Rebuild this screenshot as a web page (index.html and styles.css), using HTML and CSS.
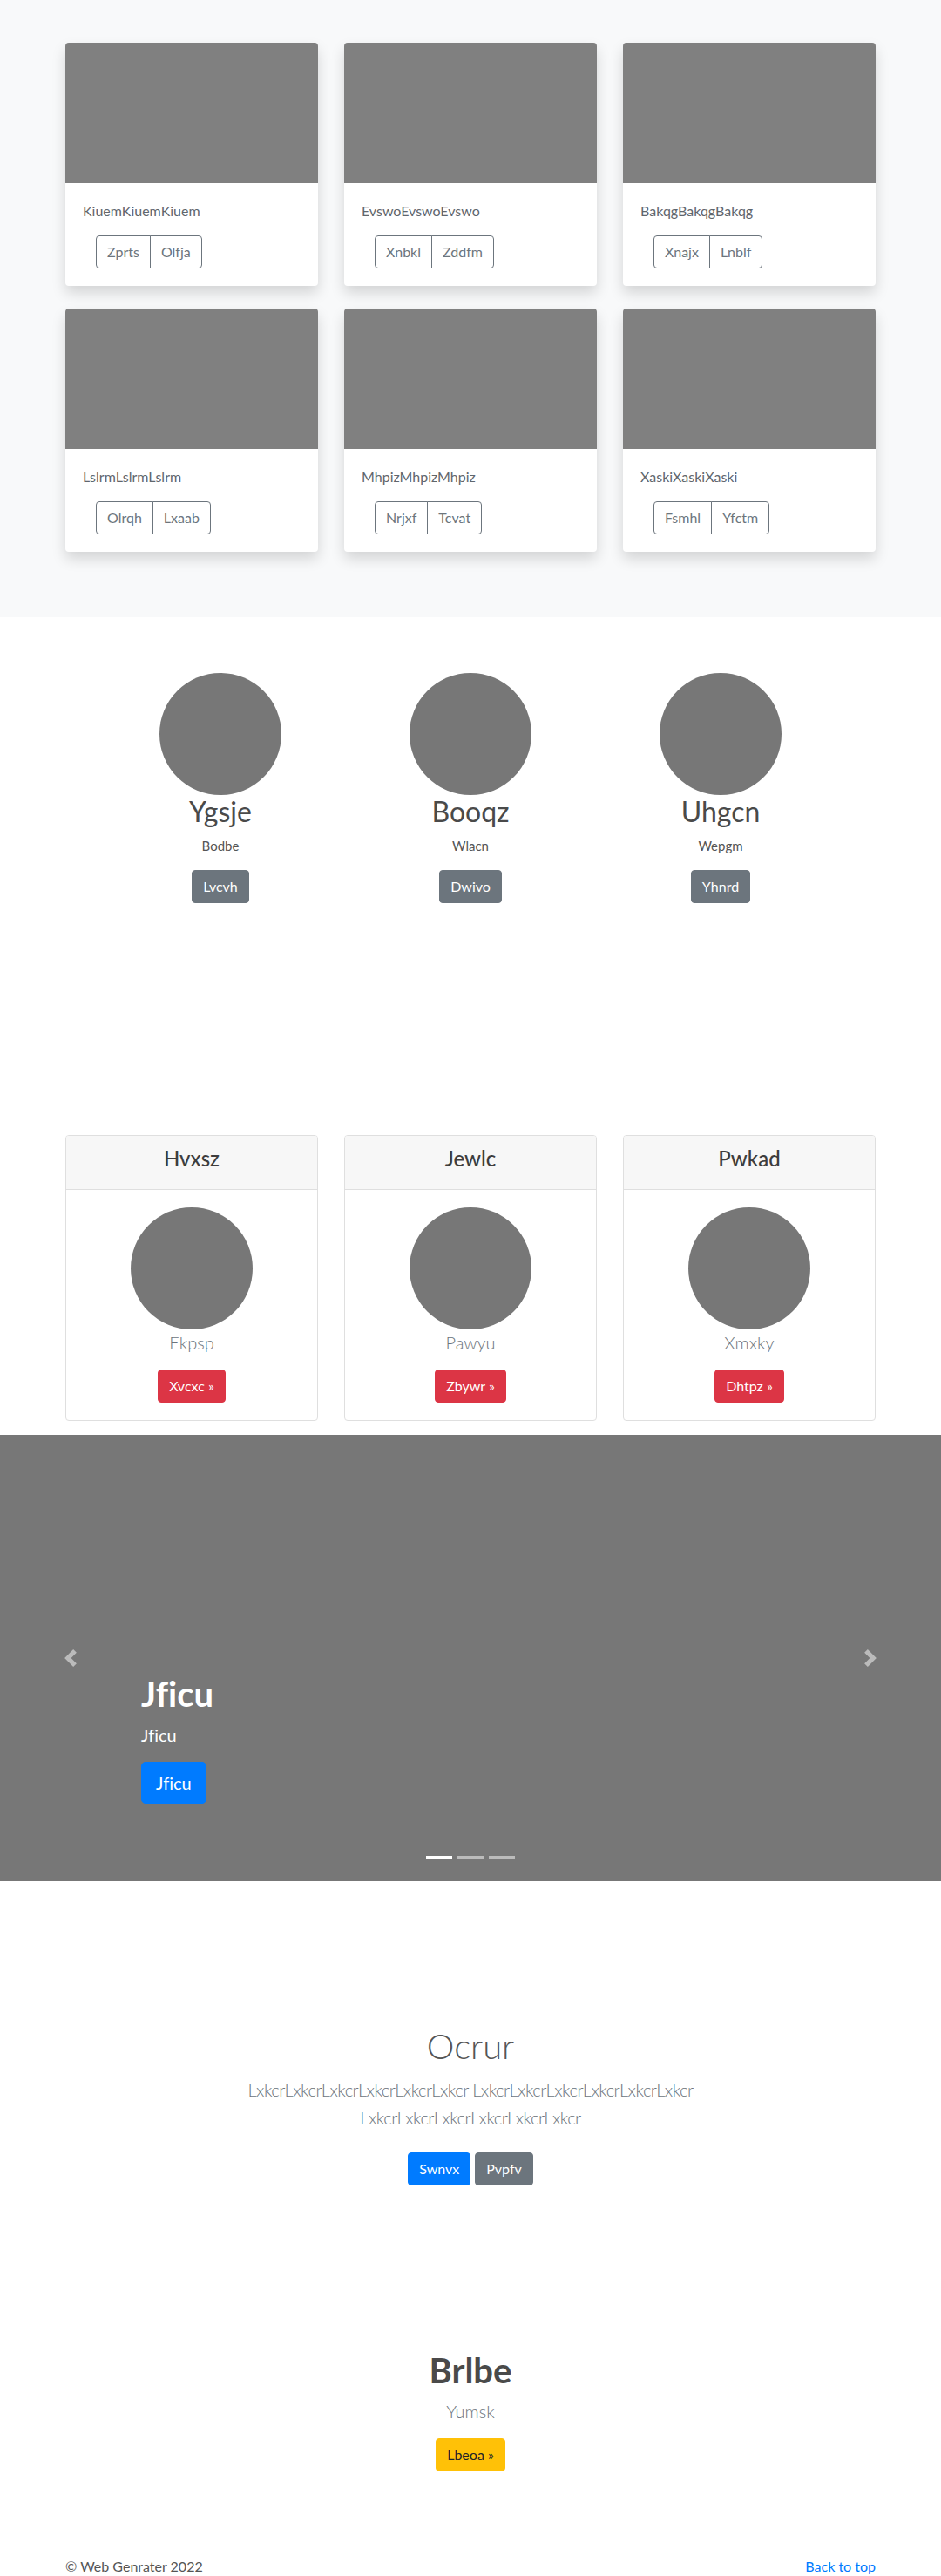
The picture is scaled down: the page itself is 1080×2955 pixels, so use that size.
FILE: index.html
```html
<!DOCTYPE html>
<html lang="en">
<head>
<meta charset="utf-8">
<title>Web Genrater</title>
<link rel="stylesheet" href="styles.css">
</head>
<body>
<section class="album">
  <div class="container album-grid">
    <div class="card">
      <div class="card-img"></div>
      <div class="card-body">
        <p class="card-text">KiuemKiuemKiuem</p>
        <div class="btn-group"><a class="btn btn-outline">Zprts</a><a class="btn btn-outline">Olfja</a></div>
      </div>
    </div>
    <div class="card">
      <div class="card-img"></div>
      <div class="card-body">
        <p class="card-text">EvswoEvswoEvswo</p>
        <div class="btn-group"><a class="btn btn-outline">Xnbkl</a><a class="btn btn-outline">Zddfm</a></div>
      </div>
    </div>
    <div class="card">
      <div class="card-img"></div>
      <div class="card-body">
        <p class="card-text">BakqgBakqgBakqg</p>
        <div class="btn-group"><a class="btn btn-outline">Xnajx</a><a class="btn btn-outline">Lnblf</a></div>
      </div>
    </div>
    <div class="card">
      <div class="card-img"></div>
      <div class="card-body">
        <p class="card-text">LslrmLslrmLslrm</p>
        <div class="btn-group"><a class="btn btn-outline">Olrqh</a><a class="btn btn-outline">Lxaab</a></div>
      </div>
    </div>
    <div class="card">
      <div class="card-img"></div>
      <div class="card-body">
        <p class="card-text">MhpizMhpizMhpiz</p>
        <div class="btn-group"><a class="btn btn-outline">Nrjxf</a><a class="btn btn-outline">Tcvat</a></div>
      </div>
    </div>
    <div class="card">
      <div class="card-img"></div>
      <div class="card-body">
        <p class="card-text">XaskiXaskiXaski</p>
        <div class="btn-group"><a class="btn btn-outline">Fsmhl</a><a class="btn btn-outline">Yfctm</a></div>
      </div>
    </div>
  </div>
</section>

<section class="features">
  <div class="features-grid">
    <div class="feature">
      <div class="avatar"></div>
      <h2 class="feature-title">Ygsje</h2>
      <p class="feature-text">Bodbe</p>
      <a class="btn btn-secondary">Lvcvh</a>
    </div>
    <div class="feature">
      <div class="avatar"></div>
      <h2 class="feature-title">Booqz</h2>
      <p class="feature-text">Wlacn</p>
      <a class="btn btn-secondary">Dwivo</a>
    </div>
    <div class="feature">
      <div class="avatar"></div>
      <h2 class="feature-title">Uhgcn</h2>
      <p class="feature-text">Wepgm</p>
      <a class="btn btn-secondary">Yhnrd</a>
    </div>
  </div>
</section>

<section class="team">
  <div class="container team-grid">
    <div class="team-card">
      <div class="team-header"><h4 class="team-name">Hvxsz</h4></div>
      <div class="team-body">
        <div class="avatar"></div>
        <p class="team-role">Ekpsp</p>
        <a class="btn btn-danger">Xvcxc »</a>
      </div>
    </div>
    <div class="team-card">
      <div class="team-header"><h4 class="team-name">Jewlc</h4></div>
      <div class="team-body">
        <div class="avatar"></div>
        <p class="team-role">Pawyu</p>
        <a class="btn btn-danger">Zbywr »</a>
      </div>
    </div>
    <div class="team-card">
      <div class="team-header"><h4 class="team-name">Pwkad</h4></div>
      <div class="team-body">
        <div class="avatar"></div>
        <p class="team-role">Xmxky</p>
        <a class="btn btn-danger">Dhtpz »</a>
      </div>
    </div>
  </div>
</section>

<section class="carousel">
  <a class="carousel-control prev" aria-label="Previous">
    <svg class="control-icon" viewBox="0 0 8 8" width="20" height="20"><path d="M5.25 0l-4 4 4 4 1.5-1.5L4.25 4l2.5-2.5L5.25 0z" fill="#fff"/></svg>
  </a>
  <a class="carousel-control next" aria-label="Next">
    <svg class="control-icon" viewBox="0 0 8 8" width="20" height="20"><path d="M2.75 0l-1.5 1.5L3.75 4l-2.5 2.5L2.75 8l4-4-4-4z" fill="#fff"/></svg>
  </a>
  <div class="carousel-caption">
    <h1 class="caption-title">Jficu</h1>
    <p class="caption-text">Jficu</p>
    <p class="caption-action"><a class="btn btn-lg btn-primary">Jficu</a></p>
  </div>
  <ol class="indicators">
    <li class="indicator active"></li>
    <li class="indicator"></li>
    <li class="indicator"></li>
  </ol>
</section>

<section class="jumbo">
  <div class="jumbo-inner">
    <h1 class="jumbo-title">Ocrur</h1>
    <p class="jumbo-lead">LxkcrLxkcrLxkcrLxkcrLxkcrLxkcr LxkcrLxkcrLxkcrLxkcrLxkcrLxkcr LxkcrLxkcrLxkcrLxkcrLxkcrLxkcr</p>
    <p class="jumbo-actions"><a class="btn btn-primary">Swnvx</a> <a class="btn btn-secondary">Pvpfv</a></p>
  </div>
</section>

<section class="cta">
  <h1 class="cta-title">Brlbe</h1>
  <p class="cta-lead">Yumsk</p>
  <a class="btn btn-warning">Lbeoa »</a>
</section>

<footer class="footer">
  <div class="container footer-row">
    <p class="footer-copy">© Web Genrater 2022</p>
    <a class="footer-link" href="#">Back to top</a>
  </div>
</footer>
</body>
</html>
```

FILE: styles.css
```css
* { box-sizing: border-box; }

html, body {
  margin: 0;
  padding: 0;
}

body {
  font-family: "Segoe UI", Lato, "Open Sans", Roboto, sans-serif;
  font-size: 16px;
  line-height: 24px;
  color: #212529;
  background: #fff;
  font-variant-ligatures: none;
}

h1, h2, h4, p { margin: 0; }

.container {
  width: 930px;
  margin: 0 auto;
}

/* Buttons */
.btn {
  display: inline-block;
  font-size: 16px;
  line-height: 24px;
  font-weight: 400;
  padding: 6px 12px;
  border: 1px solid transparent;
  border-radius: 4px;
  text-decoration: none;
  text-align: center;
  vertical-align: middle;
  white-space: nowrap;
  cursor: pointer;
}
.btn-lg {
  font-size: 20px;
  line-height: 30px;
  padding: 8px 16px;
  border-radius: 5px;
}
.btn-primary { background: #007bff; border-color: #007bff; color: #fff; }
.btn-secondary { background: #6c757d; border-color: #6c757d; color: #fff; }
.btn-danger { background: #dc3545; border-color: #dc3545; color: #fff; }
.btn-warning { background: #ffc107; border-color: #ffc107; color: #212529; }
.btn-outline { background: #fff; border-color: #6c757d; color: #6c757d; }

.btn-group {
  display: inline-flex;
  margin-left: 15px;
}
.btn-group .btn { border-radius: 0; }
.btn-group .btn + .btn { margin-left: -1px; }
.btn-group .btn:first-child { border-radius: 4px 0 0 4px; }
.btn-group .btn:last-child { border-radius: 0 4px 4px 0; }

/* Album */
.album {
  background: #f8f9fa;
  padding: 49px 0 75px;
}
.album-grid {
  display: grid;
  grid-template-columns: repeat(3, 290px);
  column-gap: 30px;
  row-gap: 26px;
}
.card {
  background: #fff;
  border-radius: 4px;
  overflow: hidden;
  box-shadow: 0 8px 16px rgba(0, 0, 0, 0.15);
}
.card-img {
  height: 161px;
  background: #808080;
}
.card-body {
  padding: 20px;
}
.card-text {
  color: #5f666d;
  margin-bottom: 16px;
}

/* Features */
.features {
  height: 513px;
  padding-top: 64px;
  border-bottom: 1px solid #e5e5e5;
}
.features-grid {
  width: 861px;
  margin: 0 auto;
  display: grid;
  grid-template-columns: repeat(3, 1fr);
}
.feature {
  display: flex;
  flex-direction: column;
  align-items: center;
  text-align: center;
}
.avatar {
  width: 140px;
  height: 140px;
  border-radius: 50%;
  background: #777;
}
.feature-title {
  font-size: 32px;
  line-height: 38.4px;
  font-weight: 400;
  color: #4a4a4a;
  margin-bottom: 8px;
}
.feature-text {
  color: #555;
  font-size: 15px;
  margin-bottom: 16px;
}

/* Team */
.team {
  padding: 81px 0 16px;
}
.team-grid {
  display: grid;
  grid-template-columns: repeat(3, 290px);
  column-gap: 30px;
}
.team-card {
  border: 1px solid #dfdfdf;
  border-radius: 4px;
  overflow: hidden;
  text-align: center;
}
.team-header {
  background: #f7f7f7;
  border-bottom: 1px solid #dfdfdf;
  padding: 12px 20px;
}
.team-name {
  font-size: 24px;
  line-height: 28.8px;
  font-weight: 500;
  color: #3d3d3d;
  margin-bottom: 8px;
}
.team-body {
  padding: 20px;
  display: flex;
  flex-direction: column;
  align-items: center;
}
.team-role {
  font-size: 20px;
  line-height: 30px;
  font-weight: 300;
  color: #6c757d;
  margin-bottom: 16px;
}

/* Carousel */
.carousel {
  position: relative;
  height: 512px;
  background: #777;
  margin: 0;
  padding: 0;
}
.carousel-control {
  position: absolute;
  top: 0;
  bottom: 0;
  width: 162px;
  display: flex;
  align-items: center;
  justify-content: center;
  opacity: 0.5;
}
.carousel-control.prev { left: 0; }
.carousel-control.next { right: 0; }
.control-icon { display: block; }
.carousel-caption {
  position: absolute;
  left: 162px;
  right: 162px;
  bottom: 89px;
  color: #fff;
  text-align: left;
}
.caption-title {
  font-size: 40px;
  line-height: 48px;
  font-weight: 700;
  margin-bottom: 8px;
}
.caption-text {
  font-size: 20px;
  line-height: 30px;
  margin-bottom: 16px;
}
.caption-action {
  display: flex;
  margin: 0;
}
.indicators {
  position: absolute;
  left: 0;
  right: 0;
  bottom: 26px;
  display: flex;
  justify-content: center;
  list-style: none;
  margin: 0;
  padding: 0;
}
.indicator {
  width: 30px;
  height: 3px;
  margin: 0 3px;
  background: #fff;
  opacity: 0.5;
}
.indicator.active { opacity: 1; }

/* Jumbotron */
.jumbo {
  padding-top: 165px;
  text-align: center;
}
.jumbo-inner {
  width: 640px;
  margin: 0 auto;
}
.jumbo-title {
  font-size: 40px;
  line-height: 48px;
  font-weight: 300;
  color: #555;
  margin-bottom: 10px;
}
.jumbo-lead {
  font-size: 20px;
  line-height: 32px;
  font-weight: 300;
  letter-spacing: -0.5px;
  color: #6c757d;
  margin-bottom: 16px;
}
.jumbo-actions {
  margin: 0;
  padding: 8px 0;
  display: flex;
  justify-content: center;
  gap: 5px;
}

/* CTA */
.cta {
  padding-top: 180px;
  text-align: center;
  display: flex;
  flex-direction: column;
  align-items: center;
}
.cta-title {
  font-size: 40px;
  line-height: 48px;
  font-weight: 700;
  color: #4a4a4a;
  margin-bottom: 8px;
}
.cta-lead {
  font-size: 20px;
  line-height: 30px;
  font-weight: 300;
  color: #6c757d;
  margin-bottom: 16px;
}

/* Footer */
.footer {
  padding-top: 97px;
  padding-bottom: 24px;
}
.footer-row {
  display: flex;
  justify-content: space-between;
  align-items: flex-start;
}
.footer-copy {
  color: #555;
}
.footer-link {
  color: #007bff;
  text-decoration: none;
}
```
